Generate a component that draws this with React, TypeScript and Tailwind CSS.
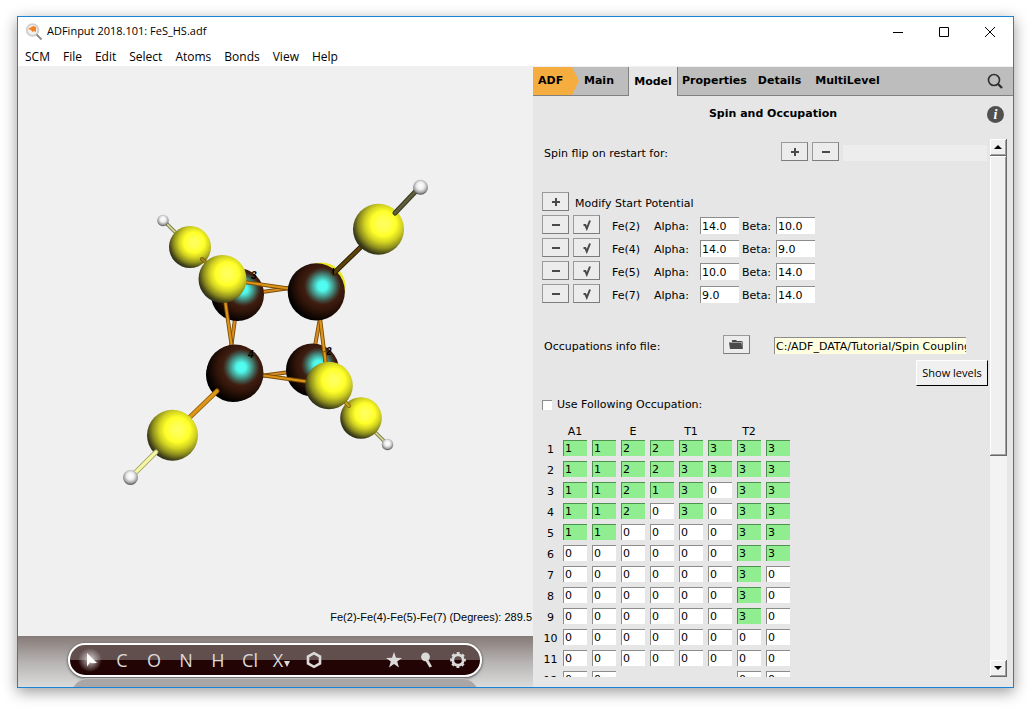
import React, { useState } from "react";

interface IPotential {
  atom: string;
  alpha: string;
  beta: string;
}

const menus = ["SCM", "File", "Edit", "Select", "Atoms", "Bonds", "View", "Help"];

const potentials: IPotential[] = [
  { atom: "Fe(2)", alpha: "14.0", beta: "10.0" },
  { atom: "Fe(4)", alpha: "14.0", beta: "9.0" },
  { atom: "Fe(5)", alpha: "10.0", beta: "14.0" },
  { atom: "Fe(7)", alpha: "9.0", beta: "14.0" },
];

const symmetries = ["A1", "E", "T1", "T2"];

// one string per level, two columns (alpha, beta) per symmetry, "-" is no field
const occupations = [
  "11223333",
  "11223333",
  "11213033",
  "11203033",
  "11000033",
  "00000033",
  "00000030",
  "00000030",
  "00000030",
  "00000000",
  "00000000",
  "00----00",
];

const elements = ["C", "O", "N", "H", "Cl"];

const sunken = "border-l border-t border-[#8c8c8c] outline-none";

function Sphere({ x, y, r, kind }: { x: number; y: number; r: number; kind: string }) {
  return <circle cx={x} cy={y} r={r} fill={`url(#${kind})`} />;
}

function Bond({ from, to, color = "#dc9418", dark = "#7a4d08", width = 4 }: {
  from: [number, number];
  to: [number, number];
  color?: string;
  dark?: string;
  width?: number;
}) {
  return (
    <g strokeLinecap="round">
      <line x1={from[0]} y1={from[1]} x2={to[0]} y2={to[1]} stroke={dark} strokeWidth={width} />
      <line x1={from[0]} y1={from[1]} x2={to[0]} y2={to[1]} stroke={color} strokeWidth={width - 1.8} />
    </g>
  );
}

function Molecule() {
  return (
    <svg viewBox="18 66 515 540" className="min-h-0 w-full flex-1" role="img" aria-label="FeS cluster">
      <defs>
        <radialGradient id="iron" cx="0.61" cy="0.4" r="0.7">
          <stop offset="0" stopColor="#52fff6" />
          <stop offset="0.12" stopColor="#50f8ec" />
          <stop offset="0.26" stopColor="#459b8e" />
          <stop offset="0.38" stopColor="#40483c" />
          <stop offset="0.46" stopColor="#3f1d10" />
          <stop offset="0.6" stopColor="#32150a" />
          <stop offset="0.78" stopColor="#140803" />
          <stop offset="0.9" stopColor="#000000" />
        </radialGradient>
        <radialGradient id="sulfur" cx="0.6" cy="0.39" r="0.68">
          <stop offset="0" stopColor="#ffff62" />
          <stop offset="0.2" stopColor="#ffff4c" />
          <stop offset="0.36" stopColor="#ffff28" />
          <stop offset="0.54" stopColor="#d2d222" />
          <stop offset="0.72" stopColor="#8e8e1e" />
          <stop offset="0.87" stopColor="#424218" />
          <stop offset="1" stopColor="#1c1c1c" />
        </radialGradient>
        <radialGradient id="hydrogen" cx="0.5" cy="0.4" r="0.62">
          <stop offset="0" stopColor="#ffffff" />
          <stop offset="0.4" stopColor="#eeeeee" />
          <stop offset="0.75" stopColor="#a0a0a0" />
          <stop offset="1" stopColor="#3c3c3c" />
        </radialGradient>
      </defs>

      {/* back of the cube */}
      <circle cx={321.5} cy={286.5} r={24} fill="#e8e822" />
      <Bond from={[262, 292]} to={[290, 288]} color="#d98c26" />
      <Bond from={[235, 319]} to={[231, 348]} color="#d98c26" />
      <Bond from={[320, 318]} to={[315, 346]} color="#d98c26" />
      <Bond from={[260, 376]} to={[290, 372]} color="#d98c26" />
      <Sphere x={237.5} y={294.5} r={26.5} kind="iron" />
      <Sphere x={312.5} y={370} r={26.5} kind="iron" />
      <Bond from={[167, 224]} to={[176, 233]} color="#dede96" dark="#77774a" width={3.5} />
      <Sphere x={163} y={220.5} r={5.7} kind="hydrogen" />
      <Sphere x={190} y={247} r={21} kind="sulfur" />
      <Bond from={[202, 259]} to={[212, 268]} dark="#6d5b08" color="#a88714" />
      <Bond from={[225, 300]} to={[232, 348]} />
      <Bond from={[244, 282]} to={[292, 289]} />
      <Sphere x={222.5} y={279} r={24} kind="sulfur" />
      <text x={251} y={279} className="fill-black font-['Liberation_Sans'] text-[10px] font-bold italic">3</text>

      {/* front of the cube */}
      <circle cx={233} cy={375} r={27} fill="#000" />
      <Bond from={[320, 318]} to={[326, 366]} />
      <Bond from={[260, 375]} to={[310, 382]} />
      <Sphere x={235} y={373} r={28.5} kind="iron" />
      <Sphere x={316.3} y={291.8} r={28.6} kind="iron" />
      <text x={326} y={355} className="fill-black font-['Liberation_Sans'] text-[10px] font-bold italic">2</text>
      <text x={248} y={358} className="fill-black font-['Liberation_Sans'] text-[10px] font-bold italic">4</text>

      <Bond from={[334, 273]} to={[366, 242]} dark="#241800" color="#5c4308" width={5} />
      <Sphere x={378.5} y={229.3} r={25.5} kind="sulfur" />
      <Bond from={[395, 213]} to={[416, 191]} dark="#34341f" color="#5e5e3c" width={5} />
      <Sphere x={420.5} y={187.3} r={7.5} kind="hydrogen" />

      <Bond from={[217, 391]} to={[188, 419]} dark="#8d5a08" color="#dd9718" width={5} />
      <Sphere x={172.5} y={435.3} r={25.5} kind="sulfur" />
      <Bond from={[156, 452]} to={[135, 473]} dark="#9c9c58" color="#f5f5a8" width={5} />
      <Sphere x={130.5} y={477.5} r={7.5} kind="hydrogen" />

      <Bond from={[373, 430]} to={[384, 441]} color="#dede96" dark="#77774a" width={3.5} />
      <Sphere x={387.5} y={444.5} r={5.7} kind="hydrogen" />
      <Sphere x={361} y={418} r={20.8} kind="sulfur" />
      <Bond from={[342, 399]} to={[349, 406]} dark="#8a6d08" color="#c9a214" />
      <Bond from={[324.5, 353]} to={[326, 366]} />
      <Sphere x={329} y={385.5} r={23.8} kind="sulfur" />
      <path d="M333.5 268v6" stroke="#000" strokeWidth={1.5} />
    </svg>
  );
}

function ToolButton({ label, children }: { label: string; children: React.ReactNode }) {
  return (
    <button
      aria-label={label}
      className="flex h-full w-8 items-center justify-center font-['Open_Sans',sans-serif] text-lg text-[#dcd9d9]"
    >
      {children}
    </button>
  );
}

function Toolbar() {
  return (
    <div className="flex h-[51px] shrink-0 flex-col overflow-hidden bg-linear-to-b from-[#867a78] via-[#b5b2b1] to-[#dcdcdc] pl-[50px] pr-[51px] pt-[7px]">
      <div className="flex h-[34px] shrink-0 items-center justify-between rounded-full border-2 border-white bg-linear-to-b from-[#614f4e] from-50% to-[#220404] to-50% pl-1 pr-[6px] shadow-[0_1px_3px_rgba(0,0,0,0.7)]">
        <div className="flex h-full">
          <ToolButton label="Select tool">
            <svg width="32" height="30" viewBox="0 0 32 30">
              <defs>
                <radialGradient id="glow">
                  <stop offset="0" stopColor="#fff" stopOpacity="0.75" />
                  <stop offset="1" stopColor="#fff" stopOpacity="0" />
                </radialGradient>
              </defs>
              <circle cx="16" cy="15" r="12" fill="url(#glow)" />
              <path d="M13 8l10 10-5 .2-2-.7-3 4z" fill="#fff" />
            </svg>
          </ToolButton>
          {elements.map((element) => (
            <ToolButton key={element} label={element}>
              {element}
            </ToolButton>
          ))}
          <ToolButton label="Other element">
            X
            <svg width="8" height="6" viewBox="0 0 8 6" className="mt-2">
              <path d="M1 0h6L4 6z" fill="#dcd9d9" />
            </svg>
          </ToolButton>
          <ToolButton label="Ring">
            <svg width="18" height="18" viewBox="0 0 18 18" fill="none">
              <path d="M9 2.200l6 3.400v6.800l-6 3.400-6-3.400V5.600z" stroke="#dcd9d9" strokeWidth="2.600" />
            </svg>
          </ToolButton>
        </div>
        <div className="flex h-full">
          <ToolButton label="Favorites">
            <svg width="16" height="16" viewBox="0 0 16 16" fill="#dcd9d9">
              <path d="M8 0l2 5.700 6 .2-4.800 3.700L13 15.500 8 12l-5 3.500 1.800-5.900L0 5.900l6-.2z" />
            </svg>
          </ToolButton>
          <ToolButton label="Pin">
            <svg width="16" height="16" viewBox="0 0 16 16" fill="#dcd9d9">
              <circle cx="7.500" cy="4.800" r="4.400" />
              <path d="M7 8l2.800-1 4.200 7.500-2.500 1z" />
            </svg>
          </ToolButton>
          <ToolButton label="Settings">
            <svg width="16" height="16" viewBox="0 0 16 16" fill="none" stroke="#dcd9d9">
              <circle cx="8" cy="8" r="5.200" strokeWidth="2.800" />
              <circle cx="8" cy="8" r="6.900" strokeWidth="2" strokeDasharray="2.900 2.520" strokeDashoffset="1.450" />
            </svg>
          </ToolButton>
        </div>
      </div>
      <div className="mx-[3px] mt-px h-[34px] shrink-0 rounded-full border border-[#c4c2c1] bg-[#aaa6a5]" />
    </div>
  );
}

function SmallButton({ label, children }: { label: string; children: React.ReactNode }) {
  return (
    <button
      aria-label={label}
      className="flex h-[19px] w-[27px] shrink-0 items-center justify-center border border-t-[#9a9a9a] border-r-[#7c7c7c] border-b-[#7c7c7c] border-l-[#9a9a9a] bg-[#ececec]"
    >
      <svg width="12" height="12" viewBox="0 0 12 12" fill="none" stroke="#4a4a4a" strokeWidth="2">
        {children}
      </svg>
    </button>
  );
}

const plus = <path d="M2 6h8M6 2v8" />;
const minus = <path d="M2 6h8" />;
const check = <path d="M2.500 6H4.300L5.800 9.500 9 1.500" />;

function Tabs() {
  return (
    <nav className="flex h-[29px] shrink-0 bg-[#bdbdbd] font-bold">
      <div className="w-[46px] border-b border-[#808080]">
        <button className="h-full w-full bg-[#f6ad3f] pl-[5px] pt-px text-left [clip-path:polygon(0_0,39px_0,100%_50%,39px_100%,0_100%)]">
          ADF
        </button>
      </div>
      <button className="w-[49px] border-b border-[#808080] pl-[5px] pt-px text-left">Main</button>
      <button className="w-[50px] border-x border-[#808080] bg-[#e6e6e6] pt-px">Model</button>
      <button className="border-b border-[#808080] px-1 pt-px">Properties</button>
      <button className="border-b border-[#808080] px-[7px] pt-px">Details</button>
      <button className="border-b border-[#808080] px-[7px] pt-px">MultiLevel</button>
      <div className="flex flex-1 items-center justify-end border-b border-[#808080] pr-[10px]">
        <button aria-label="Search">
          <svg width="16" height="16" viewBox="0 0 16 16" fill="none" stroke="#2e2e2e">
            <circle cx="7" cy="7" r="5.500" strokeWidth="1.600" />
            <path d="M11 11l4 4" strokeWidth="2.400" />
          </svg>
        </button>
      </div>
    </nav>
  );
}

function OccupationTable() {
  return (
    <table className="mt-[10px] border-separate border-spacing-0 self-start">
      <thead>
        <tr className="h-[18px]">
          <td className="w-[21px] p-0" />
          {symmetries.map((name) => (
            <React.Fragment key={name}>
              <th scope="col" className="w-[29px] p-0 pr-[5px] pt-[2px] text-center font-normal leading-4">{name}</th>
              <td className="w-[29px] p-0" />
            </React.Fragment>
          ))}
        </tr>
      </thead>
      <tbody>
        {occupations.map((row, level) => (
          <tr key={level} className="h-[21px]">
            <th scope="row" className="p-0 pr-1 text-center align-top font-normal leading-5">{level + 1}</th>
            {row.split("").map((value, i) => (
              <td key={i} className="p-0 pr-[5px] align-top">
                {value !== "-" && (
                  <input
                    aria-label={`${symmetries[Math.floor(i / 2)]} level ${level + 1}`}
                    defaultValue={value}
                    className={`block h-4 w-6 border-l border-t pl-px pt-[2px] outline-none ${
                      value === "0" ? "border-[#8c8c8c] bg-white" : "border-[#4f9150] bg-[#90ee90]"
                    }`}
                  />
                )}
              </td>
            ))}
          </tr>
        ))}
      </tbody>
    </table>
  );
}

function ScrollBar() {
  const raised =
    "flex items-center justify-center border-b border-r border-[#696969] bg-[#f0f0f0] shadow-[inset_1px_1px_0_#fff,inset_-1px_-1px_0_#a0a0a0]";
  return (
    <div className="flex w-[17px] shrink-0 flex-col bg-[#f3f3f3]">
      <button aria-label="Scroll up" className={`h-[17px] shrink-0 ${raised}`}>
        <svg width="8" height="4" viewBox="0 0 8 4"><path d="M0 4l4-4 4 4z" /></svg>
      </button>
      <div className={`h-[300px] ${raised}`} />
      <button aria-label="Scroll down" className={`mt-auto h-[17px] shrink-0 ${raised}`}>
        <svg width="8" height="4" viewBox="0 0 8 4"><path d="M0 0h8L4 4z" /></svg>
      </button>
    </div>
  );
}

function SpinPanel() {
  const [useOccupation, setUseOccupation] = useState(false);

  return (
    <section className="flex w-[480px] shrink-0 flex-col border-t border-[#f0f0f0] bg-[#e6e6e6] font-['DejaVu_Sans',sans-serif] text-[11px] text-black">
      <Tabs />
      <div className="flex h-[43px] shrink-0 items-start pr-[9px] pt-[10px]">
        <h1 className="flex-1 pl-[26px] text-center font-bold leading-4">Spin and Occupation</h1>
        <button
          aria-label="Info"
          className="size-[17px] rounded-full bg-[#505050] font-['Liberation_Serif',serif] text-sm font-bold italic leading-[17px] text-white"
        >
          i
        </button>
      </div>

      <div className="flex min-h-0 flex-1 pb-[10px] pr-[6px]">
        <div className="mr-[2px] flex min-w-0 flex-1 flex-col overflow-hidden pl-[9px] pt-[3px]">
          <div className="flex items-end gap-1 pr-px">
            <label htmlFor="flip" className="ml-[2px] mr-auto leading-[15px]">Spin flip on restart for:</label>
            <SmallButton label="Add spin flip">{plus}</SmallButton>
            <SmallButton label="Remove spin flip">{minus}</SmallButton>
            <input id="flip" readOnly className="h-4 w-36 bg-[#ededed] outline-none" />
          </div>

          <div className="mt-[31px] flex items-end gap-[6px]">
            <SmallButton label="Add start potential">{plus}</SmallButton>
            <span className="leading-[15px]">Modify Start Potential</span>
          </div>
          {potentials.map((p) => (
            <div key={p.atom} className="mt-1 flex items-end leading-[15px]">
              <div className="flex gap-1">
                <SmallButton label={`Remove ${p.atom}`}>{minus}</SmallButton>
                <SmallButton label={`Check ${p.atom}`}>{check}</SmallButton>
              </div>
              <span className="ml-3 w-[42px]">{p.atom}</span>
              <label htmlFor={`alpha-${p.atom}`} className="w-[46px]">Alpha:</label>
              <input id={`alpha-${p.atom}`} defaultValue={p.alpha} className={`h-[17px] w-[39px] bg-white pl-px ${sunken}`} />
              <label htmlFor={`beta-${p.atom}`} className="ml-[3px] w-[34px]">Beta:</label>
              <input id={`beta-${p.atom}`} defaultValue={p.beta} className={`h-[17px] w-[39px] bg-white pl-px ${sunken}`} />
            </div>
          ))}

          <div className="mt-8 flex items-end">
            <label htmlFor="info-file" className="ml-[2px] mr-auto leading-[15px]">Occupations info file:</label>
            <button
              aria-label="Open file"
              className="flex h-[19px] w-[27px] items-center justify-center border border-t-[#9a9a9a] border-r-[#7c7c7c] border-b-[#7c7c7c] border-l-[#9a9a9a] bg-[#ececec]"
            >
              <svg width="15" height="11" viewBox="0 0 15 11" fill="#4a4a4a">
                <path d="M3 3V1.500L3.500 1H7l1 1h4.500l.5.500V3z" />
                <path d="M0 3.500h12.500l.8 6.500H1z" />
                <path d="M13.300 2.500H14V10h-.7z" />
              </svg>
            </button>
            <input
              id="info-file"
              defaultValue="C:/ADF_DATA/Tutorial/Spin Coupling"
              className={`ml-6 mr-[22px] h-[17px] w-48 bg-[#ffffe0] pl-px ${sunken}`}
            />
          </div>
          <button className="mt-[6px] h-[26px] w-[72px] shrink-0 self-end border border-b-black border-l-white border-r-black border-t-white bg-[#f0f0f0] font-['Open_Sans',sans-serif] text-[11px]">
            Show levels
          </button>

          <label className="mt-3 flex h-[14px] shrink-0 items-center gap-[5px]">
            <input
              type="checkbox"
              checked={useOccupation}
              onChange={(e) => setUseOccupation(e.target.checked)}
              className="size-[10px] appearance-none border-l border-t border-[#8c8c8c] bg-white checked:bg-[#505050]"
            />
            <span className="pt-px">Use Following Occupation:</span>
          </label>
          <OccupationTable />
        </div>
        <ScrollBar />
      </div>
    </section>
  );
}

export default function App() {
  return (
    <div className="flex h-screen bg-white pb-[22px] pl-[17px] pr-[21px] pt-4">
      <div className="flex min-w-0 flex-1 flex-col border border-[#1883d7] bg-white shadow-[0_4px_14px_rgba(0,0,0,0.4)]">
        <header className="shrink-0 font-['Open_Sans',sans-serif] text-black">
          <div className="flex h-[29px] items-center">
            <svg width="18" height="18" viewBox="0 0 18 18" fill="none" className="ml-[7px]">
              <circle cx="7.500" cy="7" r="5.800" fill="#f2efec" stroke="#cfcfcf" strokeWidth="1.800" />
              <path d="M3 6l5-3 3 1v5l-2-1-1.500 1L6 7z" fill="#f58220" />
              <path d="M11.500 11.500l5 5" stroke="#8a8a8a" strokeWidth="1.800" />
            </svg>
            <span className="ml-1 text-[11px]">ADFinput 2018.101: FeS_HS.adf</span>
            <div className="ml-auto flex h-full">
              <button aria-label="Minimize" className="flex w-[46px] items-center justify-center">
                <svg width="10" height="10" viewBox="0 0 10 10"><path d="M0 5h10v1H0z" /></svg>
              </button>
              <button aria-label="Maximize" className="flex w-[46px] items-center justify-center">
                <svg width="10" height="10" viewBox="0 0 10 10" fill="none" stroke="#000"><path d="M.5.5h9v9h-9z" /></svg>
              </button>
              <button aria-label="Close" className="flex w-[46px] items-center justify-center">
                <svg width="10" height="10" viewBox="0 0 10 10" stroke="#000"><path d="M0 0l10 10M10 0L0 10" /></svg>
              </button>
            </div>
          </div>
          <nav className="flex h-5 items-center gap-[13px] pl-[7px] pt-[2px] text-xs">
            {menus.map((menu) => (
              <button key={menu}>{menu}</button>
            ))}
          </nav>
        </header>

        <div className="flex min-h-0 flex-1">
          <main className="flex min-w-0 flex-1 flex-col bg-[#f0f0f0]">
            <Molecule />
            <p className="h-[30px] self-end pr-px pt-[3px] font-['Liberation_Sans',sans-serif] text-[11px] leading-4 text-black">
              Fe(2)-Fe(4)-Fe(5)-Fe(7) (Degrees): 289.5
            </p>
            <Toolbar />
          </main>
          <SpinPanel />
        </div>
      </div>
    </div>
  );
}
